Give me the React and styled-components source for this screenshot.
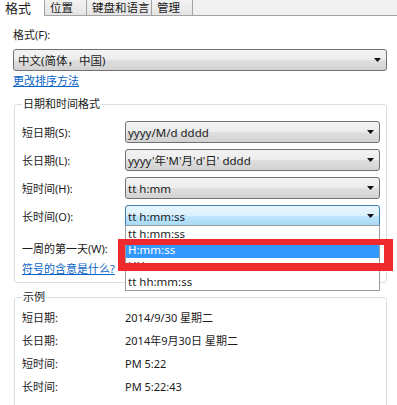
import React from 'react';
import styled, { createGlobalStyle } from 'styled-components';

const Global = createGlobalStyle`
  html, body { margin: 0; padding: 0; background: #fff; }
  body {
    font-family: "Noto Sans", "Noto Sans CJK SC", sans-serif;
    font-size: 11px;
    color: #1c1c1c;
  }
`;

const Window = styled.div`
  position: relative;
  width: 397px;
  height: 405px;
  overflow: hidden;
  background: #fff;
`;

const TabStrip = styled.div`
  display: flex;
  height: 15px;
  background: #f0f0f0;
  border-bottom: 1px solid #a3a3a3;
`;

const Tab = styled.div`
  box-sizing: border-box;
  width: ${p => p.$w}px;
  height: ${p => (p.$active ? 16 : 15)}px;
  padding-left: 5px;
  display: flex;
  align-items: center;
  line-height: 15px;
  white-space: nowrap;
  border-right: 1px solid #a3a3a3;
  background: ${p => (p.$active ? '#fff' : 'linear-gradient(#f3f3f3, #e4e4e4)')};
  position: relative;
  z-index: ${p => (p.$active ? 1 : 0)};
  font-size: ${p => (p.$active ? 13 : 11.5)}px;
`;

const Page = styled.div`
  padding: 0 10px 0 13px;
`;

const FieldLabel = styled.div`
  margin-top: 11px;
  line-height: 16px;
`;

const Combo = styled.div`
  box-sizing: border-box;
  height: 22px;
  margin-top: ${p => p.$mt || 0}px;
  display: flex;
  align-items: center;
  justify-content: space-between;
  padding: 0 5px 0 ${p => p.$pl || 2}px;
  border: 1px solid ${p => (p.$active ? '#3c7fb1' : '#707070')};
  border-radius: 3px;
  background: ${p =>
    p.$active
      ? 'linear-gradient(#eaf6fd 0%, #d9f0fc 50%, #bee6fd 50%, #a7d9f5 100%)'
      : 'linear-gradient(#f3f3f3 0%, #ececec 50%, #dfdfdf 50%, #d2d2d2 100%)'};
  white-space: nowrap;
  position: relative;
  font-size: 11.5px;
`;

const ArrowSvg = styled.svg`
  margin-left: auto;
  flex: none;
`;

const Arrow = () => (
  <ArrowSvg width="7" height="4" viewBox="0 0 7 4">
    <path d="M0 0H7L3.5 4Z" fill="#111" />
  </ArrowSvg>
);

const Link = styled.a`
  display: block;
  line-height: 16px;
  margin-top: ${p => p.$mt || 0}px;
  color: #0a64c8;
  text-decoration: underline;
  cursor: pointer;
  white-space: nowrap;
`;

const Group = styled.fieldset`
  margin: ${p => p.$mt}px 0 0 1px;
  padding: ${p => p.$pt}px 6px ${p => p.$pb}px 7px;
  border: 1px solid #d5dfe5;
  border-radius: 3px;
  min-width: 0;
`;

const Legend = styled.legend`
  padding: 0 1px;
  line-height: 16px;
`;

const Rows = styled.div`
  display: flex;
  flex-direction: column;
  gap: 6px;
`;

const Row = styled.div`
  display: grid;
  grid-template-columns: 103px 1fr;
  align-items: center;
  margin-top: ${p => p.$mt || 0}px;
  min-height: 22px;
`;

const SampleRow = styled.div`
  display: grid;
  grid-template-columns: 103px 1fr;
  line-height: 23px;
  white-space: nowrap;
`;

const Label = styled.span`
  white-space: nowrap;
`;

const DropList = styled.ul`
  position: absolute;
  left: -1px;
  right: -1px;
  top: calc(100% - 1px);
  margin: 0;
  padding: 0;
  list-style: none;
  background: #fff;
  border: 1px solid #9a9a9a;
  z-index: 5;
`;

const Option = styled.li`
  height: 16px;
  line-height: 16px;
  padding-left: 2px;
  background: ${p => (p.$sel ? '#3399ff' : 'transparent')};
  color: ${p => (p.$sel ? '#fff' : '#1c1c1c')};
`;

const RedMark = styled.div`
  position: absolute;
  left: 118px;
  top: 239px;
  width: 275px;
  height: 32px;
  box-sizing: border-box;
  border-style: solid;
  border-color: #ee2a2f;
  border-width: 6px 9px 8px 7px;
  z-index: 10;
  pointer-events: none;
`;

const formatRows = [
  { label: '短日期(S):', value: 'yyyy/M/d dddd' },
  { label: '长日期(L):', value: "yyyy'年'M'月'd'日' dddd" },
  { label: '短时间(H):', value: 'tt h:mm' },
];

const samples = [
  ['短日期:', '2014/9/30 星期二'],
  ['长日期:', '2014年9月30日 星期二'],
  ['短时间:', 'PM 5:22'],
  ['长时间:', 'PM 5:22:43'],
];

const options = ['tt h:mm:ss', 'H:mm:ss', 'HH:mm:ss', 'tt hh:mm:ss'];

export default function App() {
  return (
    <Window>
      <Global />
      <TabStrip>
        <Tab $w={45} $active>格式</Tab>
        <Tab $w={42}>位置</Tab>
        <Tab $w={65}>键盘和语言</Tab>
        <Tab $w={41}>管理</Tab>
      </TabStrip>
      <Page>
        <FieldLabel>格式(F):</FieldLabel>
        <Combo $mt={6} $pl={4}>
          <span>中文(简体，中国)</span>
          <Arrow />
        </Combo>
        <Link $mt={2}>更改排序方法</Link>

        <Group $mt={7} $pt={9} $pb={5}>
          <Legend>日期和时间格式</Legend>
          <Rows>
            {formatRows.map(r => (
              <Row key={r.label}>
                <Label>{r.label}</Label>
                <Combo>
                  <span>{r.value}</span>
                  <Arrow />
                </Combo>
              </Row>
            ))}
            <Row>
              <Label>长时间(O):</Label>
              <Combo $active>
                <span>tt h:mm:ss</span>
                <Arrow />
                <DropList>
                  {options.map((o, i) => (
                    <Option key={o} $sel={i === 1}>{o}</Option>
                  ))}
                </DropList>
              </Combo>
            </Row>
            <Row $mt={4}>
              <Label>一周的第一天(W):</Label>
              <Combo>
                <Arrow />
              </Combo>
            </Row>
          </Rows>
          <Link $mt={2}>符号的含意是什么?</Link>
        </Group>

        <Group $mt={6} $pt={1} $pb={10}>
          <Legend>示例</Legend>
          {samples.map(([l, v]) => (
            <SampleRow key={l}>
              <Label>{l}</Label>
              <span>{v}</span>
            </SampleRow>
          ))}
        </Group>
      </Page>
      <RedMark />
    </Window>
  );
}
